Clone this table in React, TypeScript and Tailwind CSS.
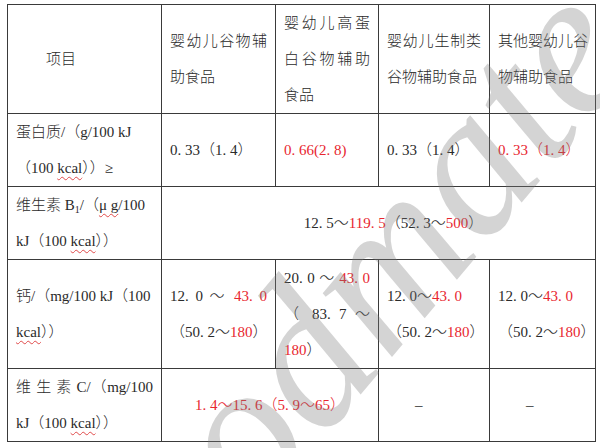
import React from 'react';

function R({ children }: { children: React.ReactNode }) {
  return <span className="text-[#e8262f]">{children}</span>;
}

function Wavy({ children }: { children: React.ReactNode }) {
  return (
    <span className="underline decoration-wavy decoration-[#e04a4a] decoration-1 underline-offset-[3px]">{children}</span>
  );
}

function Line({ children, justify = false, className = '' }: { children: React.ReactNode; justify?: boolean; className?: string }) {
  return (
    <div className={`leading-[36px] whitespace-nowrap ${justify ? 'text-justify [text-align-last:justify] whitespace-normal' : ''} ${className}`}>
      {children}
    </div>
  );
}

const cell = 'border border-[#3a3a3a] align-middle px-[8px]';

export default function App() {
  return (
    <div className="relative w-[600px] h-[448px] overflow-hidden bg-white font-['Liberation_Serif','Noto_Sans_CJK_SC',serif] text-[15px] font-light text-[#2a2a2a]">
      <div className="pt-[4px] pl-[7px]">
        <table className="table-fixed border-collapse w-[588px]">
          <colgroup>
            <col className="w-[154px]" />
            <col className="w-[114px]" />
            <col className="w-[103px]" />
            <col className="w-[111px]" />
            <col className="w-[106px]" />
          </colgroup>
          <tbody>
            <tr className="h-[109px]">
              <td className={`${cell} pl-[38px]`}>
                <Line>项目</Line>
              </td>
              <td className={cell}>
                <Line justify>婴幼儿谷物辅</Line>
                <Line>助食品</Line>
              </td>
              <td className={cell}>
                <Line justify>婴幼儿高蛋</Line>
                <Line justify>白谷物辅助</Line>
                <Line>食品</Line>
              </td>
              <td className={cell}>
                <Line justify>婴幼儿生制类</Line>
                <Line>谷物辅助食品</Line>
              </td>
              <td className={cell}>
                <Line justify>其他婴幼儿谷</Line>
                <Line>物辅助食品</Line>
              </td>
            </tr>

            <tr className="h-[73px]">
              <td className={cell}>
                <Line>蛋白质/（g/100 kJ</Line>
                <Line>（100 <Wavy>kcal</Wavy>））≥</Line>
              </td>
              <td className={cell}>
                <Line>0. 33（1. 4）</Line>
              </td>
              <td className={cell}>
                <Line><R>0. 66(2. 8)</R></Line>
              </td>
              <td className={cell}>
                <Line>0. 33（1. 4）</Line>
              </td>
              <td className={cell}>
                <Line><R>0. 33（1. 4）</R></Line>
              </td>
            </tr>

            <tr className="h-[73px]">
              <td className={cell}>
                <Line>
                  维生素 B<sub className="text-[10px]">1</sub>/（<Wavy>μ g</Wavy>/100
                </Line>
                <Line>kJ（100 <Wavy>kcal</Wavy>））</Line>
              </td>
              <td className={`${cell} text-center pl-[38px]`} colSpan={4}>
                <Line>
                  12. 5～<R>119. 5</R>（52. 3～<R>500</R>）
                </Line>
              </td>
            </tr>

            <tr className="h-[108px]">
              <td className={cell}>
                <Line>钙/（mg/100 kJ（100</Line>
                <Line><Wavy>kcal</Wavy>））</Line>
              </td>
              <td className={cell}>
                <Line justify>12. 0 ～ <R>43. 0</R></Line>
                <Line>（50. 2～<R>180</R>）</Line>
              </td>
              <td className={cell}>
                <Line justify>20. 0 ～ <R>43. 0</R></Line>
                <Line justify>（ 83. 7 ～</Line>
                <Line><R>180</R>）</Line>
              </td>
              <td className={cell}>
                <Line>12. 0～<R>43. 0</R></Line>
                <Line>（50. 2～<R>180</R>）</Line>
              </td>
              <td className={cell}>
                <Line>12. 0～<R>43. 0</R></Line>
                <Line>（50. 2～<R>180</R>）</Line>
              </td>
            </tr>

            <tr className="h-[73px]">
              <td className={cell}>
                <Line justify>维 生 素 C/（mg/100</Line>
                <Line>kJ（100 <Wavy>kcal</Wavy>））</Line>
              </td>
              <td className={`${cell} text-center`} colSpan={2}>
                <Line><R>1. 4～15. 6（5. 9～65）</R></Line>
              </td>
              <td className={`${cell} pl-[36px]`}>
                <Line>–</Line>
              </td>
              <td className={`${cell} pl-[36px]`}>
                <Line>–</Line>
              </td>
            </tr>
          </tbody>
        </table>
      </div>

      {/* watermark */}
      <div className="pointer-events-none absolute left-[345px] top-[305px] -translate-x-1/2 -translate-y-1/2 -rotate-[50deg] whitespace-nowrap font-['Liberation_Serif',serif] text-[205px] italic leading-none text-[rgba(120,120,120,0.32)]">
        foodmate
      </div>
    </div>
  );
}
